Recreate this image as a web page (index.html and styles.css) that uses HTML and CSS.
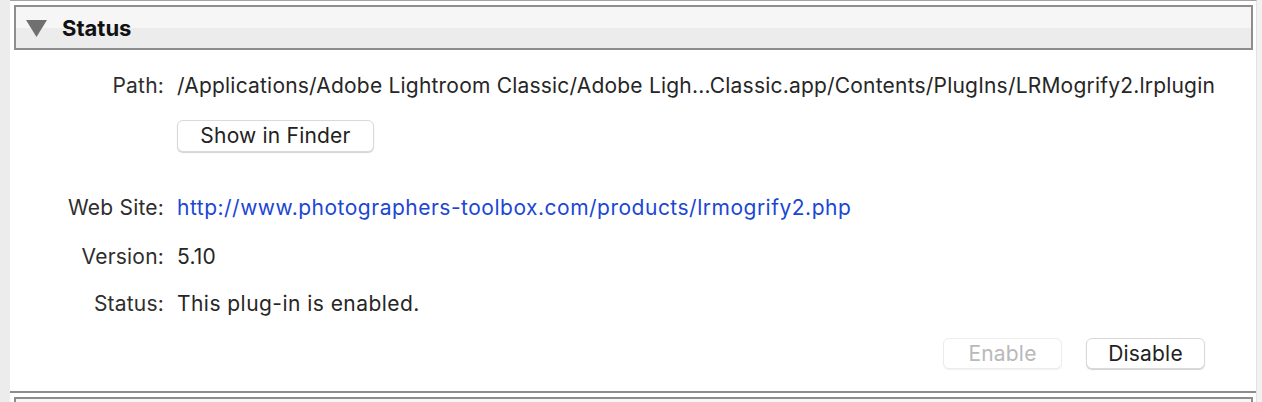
FILE: index.html
```html
<!DOCTYPE html>
<html>
<head>
<meta charset="utf-8">
<link rel="stylesheet" href="styles.css">
</head>
<body>
<div class="frame">
  <div class="left-strip"></div>
  <div class="panel">
    <div class="section-header">
      <svg class="disclosure" width="21" height="17" viewBox="0 0 21 17"><polygon points="0,0 21,0 10.5,17" fill="#707070"/></svg>
      <span class="section-title">Status</span>
    </div>
    <div class="content">
      <div class="row row-path">
        <span class="label">Path:</span>
        <span class="value">/Applications/Adobe Lightroom Classic/Adobe Ligh...Classic.app/Contents/PlugIns/LRMogrify2.lrplugin</span>
      </div>
      <div class="row row-finder">
        <span class="label"></span>
        <span class="value"><button class="btn btn-finder">Show in Finder</button></span>
      </div>
      <div class="row row-web">
        <span class="label">Web Site:</span>
        <span class="value link">http://www.photographers-toolbox.com/products/lrmogrify2.php</span>
      </div>
      <div class="row row-version">
        <span class="label">Version:</span>
        <span class="value">5.10</span>
      </div>
      <div class="row row-status">
        <span class="label">Status:</span>
        <span class="value wide">This plug-in is enabled.</span>
      </div>
      <div class="actions">
        <button class="btn btn-action btn-disabled">Enable</button>
        <button class="btn btn-action">Disable</button>
      </div>
    </div>
    <div class="divider"></div>
    <div class="next-header"></div>
  </div>
  <div class="right-strip"></div>
</div>
</body>
</html>
```

FILE: styles.css
```css
html, body {
  margin: 0;
  padding: 0;
  background: #ececec;
}
body {
  font-family: Inter, "Noto Sans", "Liberation Sans", sans-serif;
  color: #262626;
  width: 1262px;
  height: 402px;
  overflow: hidden;
}
.frame {
  display: flex;
  height: 402px;
}
.left-strip {
  width: 10px;
  background: #ececec;
  flex: none;
}
.panel {
  flex: 1;
  background: #fff;
  border-top: 1px solid #a3a3a3;
  border-right: 1px solid #e2e2e2;
  display: flex;
  flex-direction: column;
  overflow: hidden;
}
.panel > * {
  flex: none;
}
.right-strip {
  width: 5px;
  flex: none;
  background: #f2f2f2;
}
.section-header {
  margin: 4px 3px 0 4px;
  height: 41px;
  border: 2px solid #8d8d8d;
  background: linear-gradient(#f6f6f6 0, #f6f6f6 50%, #ececec 50%, #ececec 100%);
  display: flex;
  align-items: center;
}
.disclosure {
  margin-left: 10px;
  margin-top: 2px;
}
.section-title {
  margin-left: 15px;
  font-weight: 700;
  font-size: 22px;
  color: #111;
}
.content {
  display: flex;
  flex-direction: column;
  padding-top: 24px;
}
.row {
  display: grid;
  grid-template-columns: 154px 1fr;
  column-gap: 13px;
  font-size: 21px;
  letter-spacing: 0.2px;
  line-height: 24px;
  height: 24px;
}
.label {
  text-align: right;
  color: #2e2e2e;
}
.value {
  white-space: nowrap;
  color: #262626;
}
.wide {
  letter-spacing: 0.45px;
}
.link {
  color: #1b47d3;
  letter-spacing: 0.5px;
}
.row-finder {
  margin-top: 22px;
  height: 32px;
}
.row-web { margin-top: 44px; }
.row-version { margin-top: 25px; }
.row-status { margin-top: 23px; }
.btn {
  font-family: inherit;
  font-size: 21px;
  letter-spacing: 0.2px;
  color: #222;
  background: #fff;
  border: 1px solid #d9d9d9;
  border-radius: 6px;
  box-shadow: 0 1px 1px rgba(0,0,0,0.18);
  padding: 0;
  line-height: 30px;
  height: 32px;
}
.btn-finder {
  width: 197px;
}
.actions {
  display: flex;
  justify-content: flex-end;
  gap: 24px;
  margin-top: 22px;
  padding-right: 51px;
}
.btn-action {
  width: 119px;
  height: 31px;
  line-height: 29px;
}
.btn-disabled {
  color: #b9b9b9;
  border-color: #ececec;
  box-shadow: 0 1px 1px rgba(0,0,0,0.06);
}
.divider {
  margin-top: 22px;
  height: 2px;
  background: #8d8d8d;
}
.next-header {
  margin: 4px 3px 0 4px;
  height: 10px;
  border: 2px solid #8d8d8d;
  border-bottom: none;
  background: #f6f6f6;
}
```
